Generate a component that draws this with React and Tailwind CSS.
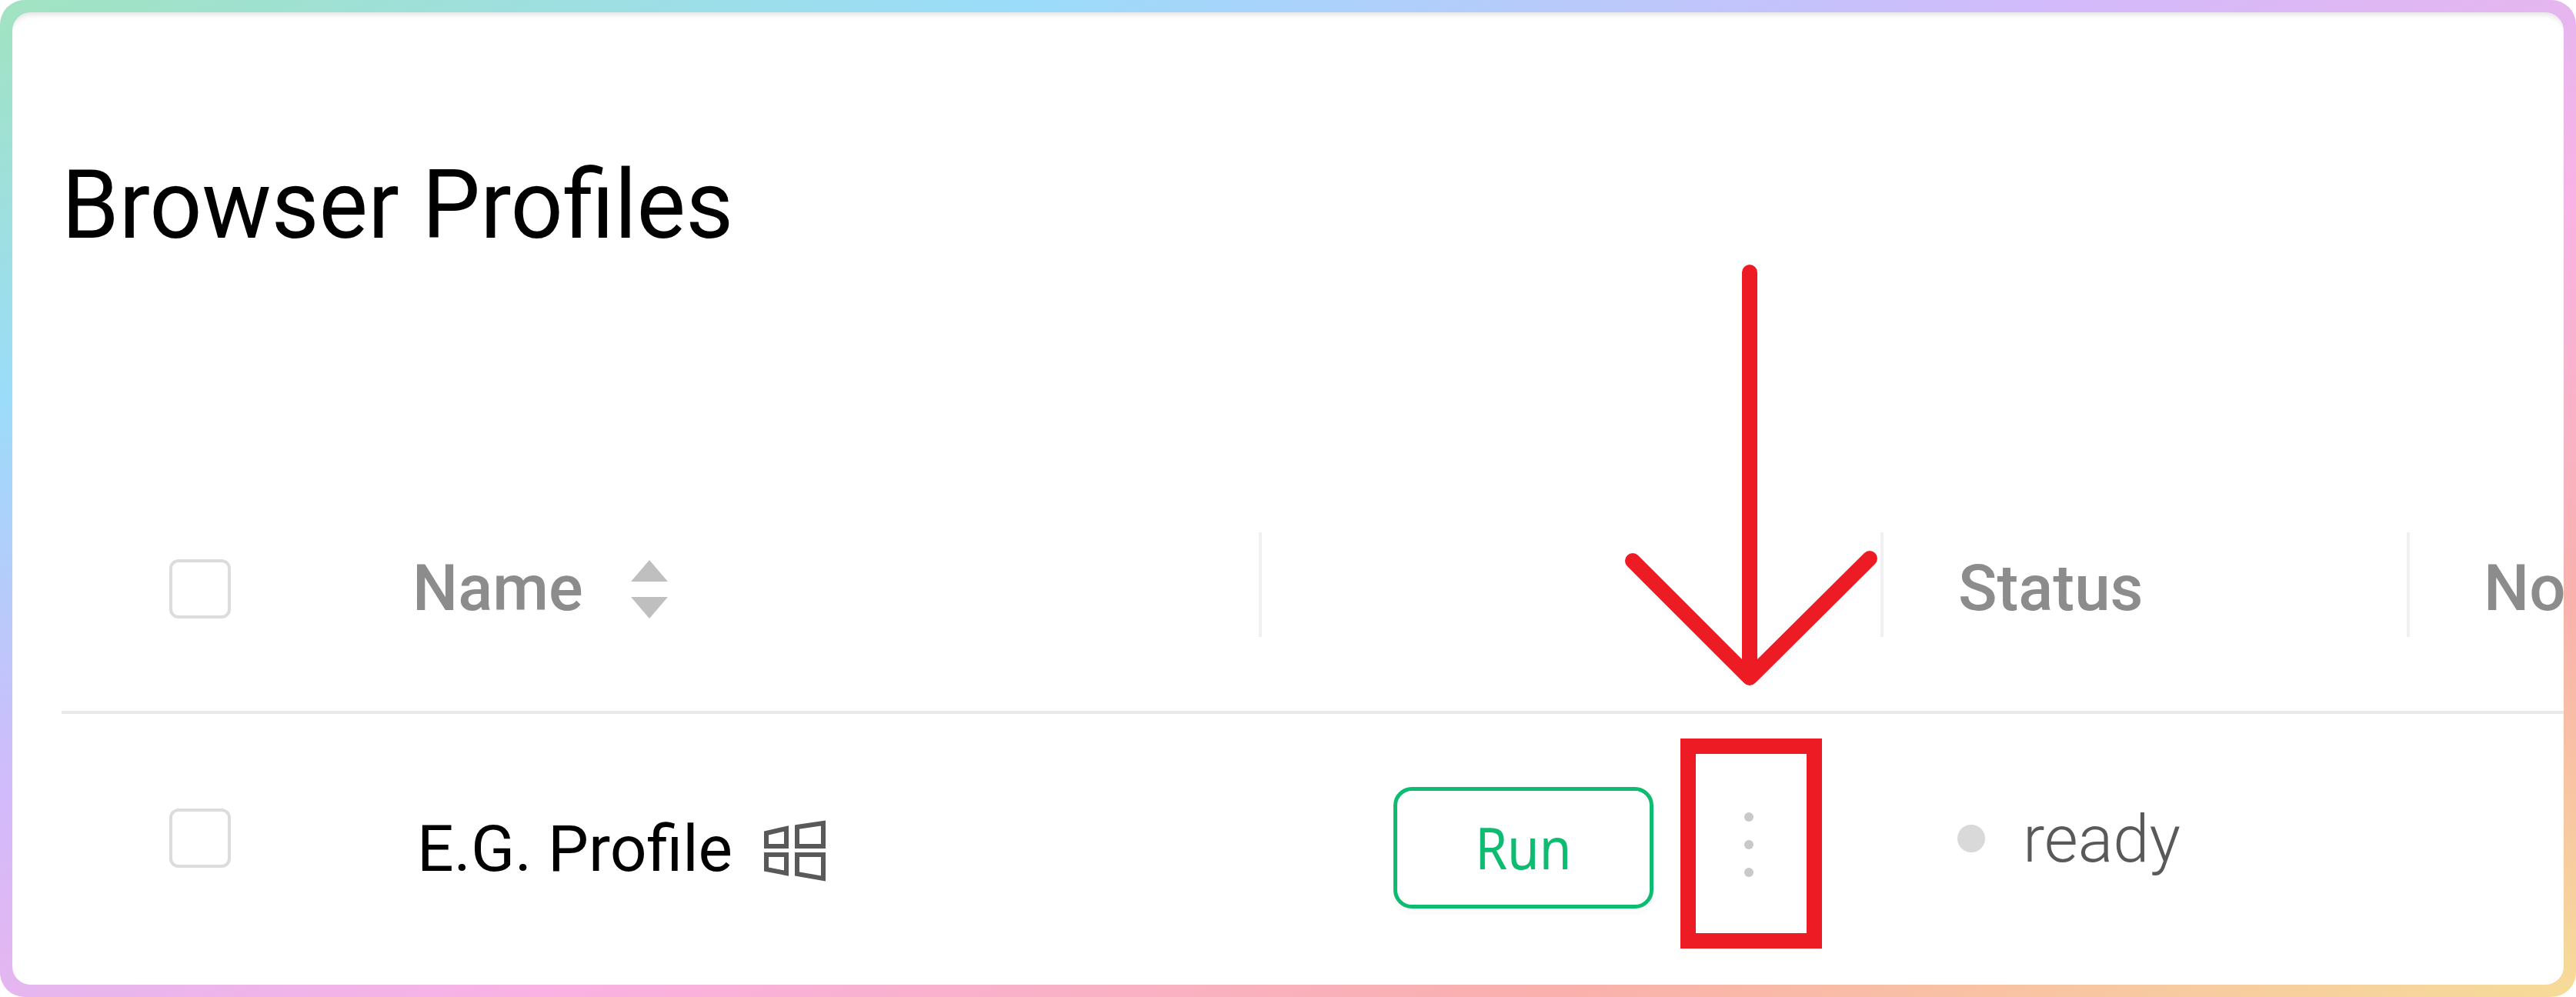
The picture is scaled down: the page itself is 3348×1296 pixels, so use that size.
import React from "react";

const columns = [
    { key: "status", label: "Status", style: "w-[684px] pl-[97px]" },
    { key: "no", label: "No", style: "w-[300px] pl-[96px]" },
];

function Checkbox() {
    return (
        <span
            role="checkbox"
            aria-checked="false"
            className="block h-[77px] w-[80px] shrink-0 rounded-[12px] border-4 border-[#dcdcdc] bg-white"
        />
    );
}

function SortIcon() {
    return (
        <svg viewBox="0 0 48 76" className="h-[76px] w-[48px] shrink-0" fill="#bfbfbf">
            <path d="M24 0L48 28H0Z" />
            <path d="M0 48H48L24 76Z" />
        </svg>
    );
}

function WindowsIcon() {
    return (
        <svg
            viewBox="0 0 80 80"
            className="h-[80px] w-[80px] shrink-0"
            fill="none"
            stroke="#595959"
            strokeWidth="6"
        >
            <path d="M3 17L29 11V34H3Z" />
            <path d="M43 9L77 4V34H43Z" />
            <path d="M3 45H29V69L3 64Z" />
            <path d="M43 45H77V76L43 70Z" />
        </svg>
    );
}

function Pointer() {
    return (
        <svg
            viewBox="0 0 440 640"
            className="absolute left-[2044px] top-[284px] h-[640px] w-[440px]"
            fill="none"
            stroke="#ed1c24"
            strokeWidth="20"
            strokeLinecap="round"
            strokeLinejoin="round"
        >
            <path d="M214 54V580" />
            <path d="M62 429L214 581L370 426" />
        </svg>
    );
}

export default function App() {
    return (
        <div className="h-[1296px] w-[3348px] overflow-hidden rounded-[32px] bg-[linear-gradient(to_bottom_right,#a1e3c0_0%,#9bdcfa_20%,#d2bafb_40%,#f9b2e4_60%,#fab0ac_80%,#f6dc98_100%)] p-4 font-[Roboto,sans-serif]">
            <main className="relative flex h-full flex-col overflow-hidden rounded-[24px] bg-white pl-[64px] shadow-[inset_0_8px_6px_-4px_rgba(0,0,0,0.1)]">
                <h1 className="mt-[176px] h-[150px] w-fit origin-left scale-x-[0.967] whitespace-nowrap text-[124px] leading-[150px] text-black">
                    Browser Profiles
                </h1>

                <div className="mt-[266px] flex h-[320px] shrink-0 flex-col border-b-4 border-[#e8e8e8]">
                    <div className="mt-[84px] flex h-[136px] items-center text-[83.5px] font-medium text-[#8c8c8c]">
                        <div className="flex h-full w-[1560px] shrink-0 items-center border-r-4 border-[#f0f0f0] pl-[140px] pt-[11px]">
                            <Checkbox />
                            <span className="-mt-[2px] ml-[236px] mr-[62px]">Name</span>
                            <SortIcon />
                        </div>
                        <div className="h-full w-[808px] shrink-0 border-r-4 border-[#f0f0f0]" />
                        {columns.map((col) => (
                            <div
                                key={col.key}
                                className={`flex h-full shrink-0 items-center border-r-4 border-[#f0f0f0] pt-[9px] ${col.style}`}
                            >
                                {col.label}
                            </div>
                        ))}
                    </div>
                </div>

                <div className="flex h-[340px] shrink-0 items-start">
                    <div className="flex w-[1731px] shrink-0 pl-[140px]">
                        <div className="mt-[123px]">
                            <Checkbox />
                        </div>
                        <span className="ml-[242px] mt-[121px] whitespace-nowrap text-[84px] leading-[110px] text-black">
                            E.G. Profile
                        </span>
                        <div className="ml-[41px] mt-[138px]">
                            <WindowsIcon />
                        </div>
                    </div>
                    <button className="mt-[95px] flex h-[158px] w-[338px] shrink-0 items-center justify-center rounded-[24px] border-[5px] border-[#0dbc70] bg-white font-[Noto_Sans,sans-serif] text-[74px] text-[#0dbc70] shadow-[0_8px_0_#fbfbfb]">
                        <span className="scale-x-[0.91] pb-[2px]">Run</span>
                    </button>
                    <div className="ml-[35px] mt-[32px] flex h-[273px] w-[184px] shrink-0 flex-col items-center justify-center gap-[24px] border-[20px] border-[#ed1c24] pr-[6px] pt-[3px]">
                        <i className="h-3 w-3 rounded-full bg-[#c9c9c9]" />
                        <i className="h-3 w-3 rounded-full bg-[#c9c9c9]" />
                        <i className="h-3 w-3 rounded-full bg-[#c9c9c9]" />
                    </div>
                    <div className="ml-[176px] mt-[105px] flex items-center text-[85px] font-light leading-[110px] text-[#595959]">
                        <i className="mr-[49px] h-9 w-9 rounded-full bg-[#d9d9d9]" />
                        <span className="pt-[3px]">ready</span>
                    </div>
                </div>

                <Pointer />
            </main>
        </div>
    );
}
